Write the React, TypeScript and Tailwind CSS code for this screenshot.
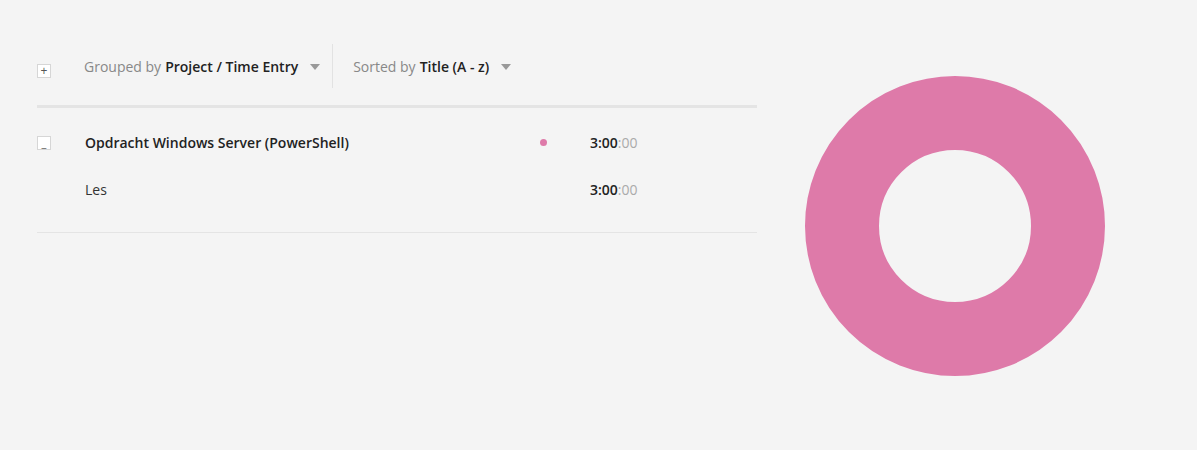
import { ReactNode } from 'react';

function Box({ children, low }: { children: ReactNode; low?: boolean }) {
  return (
    <span
      className={
        low
          ? 'flex h-[14px] w-[14px] items-end justify-center border border-[#d6d6d6] bg-white pb-[1px] text-[11px] leading-none text-[#555]'
          : 'flex h-[14px] w-[14px] items-center justify-center border border-[#d6d6d6] bg-white text-[12px] leading-none text-[#555]'
      }
    >
      {children}
    </span>
  );
}

function Caret() {
  return <span className="ml-3 inline-block h-0 w-0 border-x-[5px] border-t-[6px] border-x-transparent border-t-[#999]" />;
}

function Time() {
  return (
    <span className="text-[14px]">
      <span className="font-semibold text-[#222]">3:00</span>
      <span className="text-[#aaa]">:00</span>
    </span>
  );
}

export default function App() {
  return (
    <div
      className="flex h-[450px] w-full bg-[#f4f4f4] text-[#333]"
      style={{ fontFamily: '"Open Sans", "Liberation Sans", sans-serif' }}
    >
      <div className="ml-[37px] mt-[44px] w-[720px]">
        <div className="h-[64px] border-b-[3px] border-[#e4e4e4]">
          <div className="flex h-[44px] items-center">
            <div className="mt-[9px] flex w-[47px]">
              <Box>+</Box>
            </div>
            <div className="mt-[1px] flex items-center pr-3 text-[14px]">
              <span className="text-[#888]">Grouped by</span>
              <span className="ml-1 font-semibold text-[#222]">Project / Time Entry</span>
              <Caret />
            </div>
            <div className="h-full w-px bg-[#e2e2e2]" />
            <div className="mt-[1px] flex items-center pl-5 text-[14px]">
              <span className="text-[#888]">Sorted by</span>
              <span className="ml-1 font-semibold text-[#222]">Title (A - z)</span>
              <Caret />
            </div>
          </div>
        </div>
        <div className="mt-[23px] border-b border-[#e4e4e4] pb-[32px]">
          <div className="flex h-[22px] items-center">
            <div className="mt-[1px] w-[48px]">
              <Box low>_</Box>
            </div>
            <span className="w-[455px] text-[14px] font-semibold text-[#222]">Opdracht Windows Server (PowerShell)</span>
            <span className="h-[7px] w-[7px] rounded-full bg-[#de7aa9]" />
            <span className="ml-[43px]">
              <Time />
            </span>
          </div>
          <div className="mt-[25px] flex h-[22px] items-center">
            <span className="ml-[48px] w-[505px] text-[14px] text-[#333]">Les</span>
            <Time />
          </div>
        </div>
      </div>
      <div className="ml-[48px] mt-[76px]">
        <svg width="300" height="300" viewBox="0 0 300 300">
          <circle cx="150" cy="150" r="113" fill="none" stroke="#de7aa9" strokeWidth="74" />
        </svg>
      </div>
    </div>
  );
}
